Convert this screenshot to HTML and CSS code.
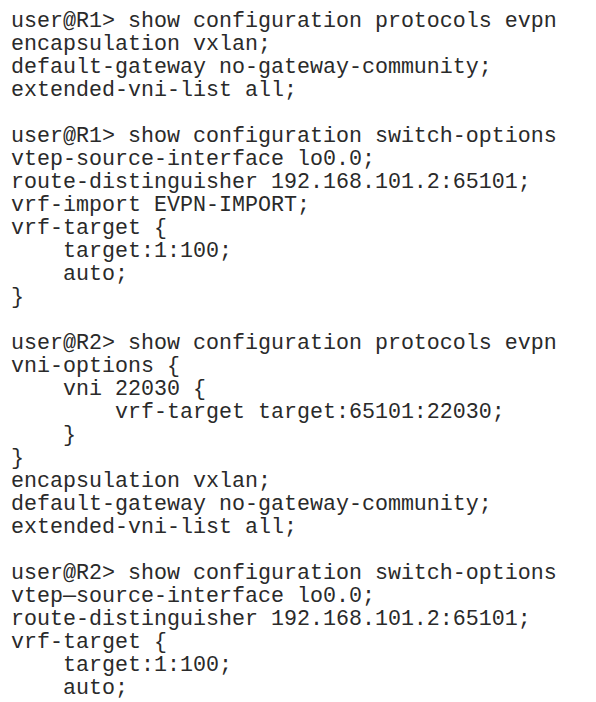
FILE: index.html
```html
<!DOCTYPE html>
<html>
<head>
<meta charset="utf-8">
<link rel="stylesheet" href="styles.css">
</head>
<body>
<pre class="config">user@R1&gt; show configuration protocols evpn
encapsulation vxlan;
default-gateway no-gateway-community;
extended-vni-list all;

user@R1&gt; show configuration switch-options
vtep-source-interface lo0.0;
route-distinguisher 192.168.101.2:65101;
vrf-import EVPN-IMPORT;
vrf-target {
    target:1:100;
    auto;
}

user@R2&gt; show configuration protocols evpn
vni-options {
    vni 22030 {
        vrf-target target:65101:22030;
    }
}
encapsulation vxlan;
default-gateway no-gateway-community;
extended-vni-list all;

user@R2&gt; show configuration switch-options
vtep—source-interface lo0.0;
route-distinguisher 192.168.101.2:65101;
vrf-target {
    target:1:100;
    auto;</pre>
</body>
</html>
```
FILE: styles.css
```css
html, body {
  margin: 0;
  background: #ffffff;
}
body {
  padding: 10px 11px;
}
.config {
  margin: 0;
  font-family: "Liberation Mono", "Courier New", monospace;
  font-size: 21.67px;
  line-height: 23px;
  color: #2a2a2a;
  white-space: pre;
}
```
